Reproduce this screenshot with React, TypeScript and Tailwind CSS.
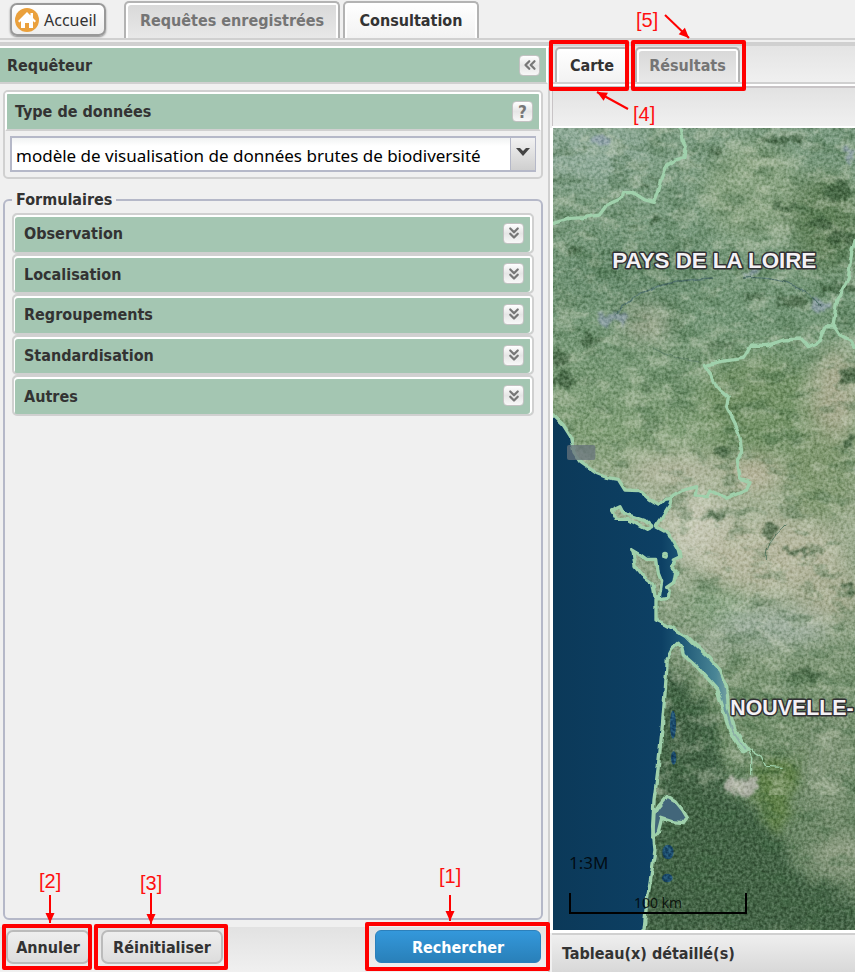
import type { ReactNode } from "react";
import { ChevronsDown, ChevronsLeft } from "lucide-react";

const FORMS = ["Observation", "Localisation", "Regroupements", "Standardisation", "Autres"];

const PLAIN = "font-['Noto_Sans',Tahoma,sans-serif]";

const TOOL =
  "flex h-[21px] w-[21px] items-center justify-center rounded-[4px] border border-[#c2c2c2] bg-linear-to-b from-white via-[#e6e6e6] to-[#f8f8f8] text-[#777]";

type Arrow = { x1: number; y1: number; x2: number; y2: number };

function Callout({
  box,
  label,
  labelAt,
  arrow,
}: {
  box: string;
  label: string;
  labelAt: string;
  arrow: Arrow;
}) {
  const angle = (Math.atan2(arrow.y2 - arrow.y1, arrow.x2 - arrow.x1) * 180) / Math.PI;
  return (
    <span
      className={`pointer-events-none absolute z-10 rounded-[2px] border-4 border-[#ff0000] ${box}`}
    >
      <span
        className={`absolute font-['Liberation_Sans',Arial,sans-serif] text-[20px] leading-5 font-normal text-[#ff1010] ${labelAt}`}
      >
        {label}
      </span>
      <svg className="absolute top-0 left-0 overflow-visible" width="1" height="1" aria-hidden="true">
        <path
          d={`M${arrow.x1} ${arrow.y1}L${arrow.x2} ${arrow.y2}`}
          stroke="#ff0000"
          strokeWidth="2"
        />
        <path
          d="M0 0L-10 -4.5V4.5Z"
          fill="#ff0000"
          transform={`translate(${arrow.x2} ${arrow.y2}) rotate(${angle})`}
        />
      </svg>
    </span>
  );
}

function Tab({
  active,
  className,
  children,
  callout,
}: {
  active?: boolean;
  className: string;
  children: ReactNode;
  callout?: ReactNode;
}) {
  return (
    <div className="relative flex">
      <button
        type="button"
        role="tab"
        aria-selected={!!active}
        className={`rounded-t-[5px] border-2 border-b-0 border-[#b3b3b3] bg-linear-to-b font-bold whitespace-nowrap shadow-[inset_2px_2px_0_#fff,inset_-2px_0_0_#fff] ${
          active ? "from-white to-[#f2f2f2] text-[#333]" : "from-[#d8d8d8] to-[#e8e8e8] text-[#757575]"
        } ${className}`}
      >
        {children}
      </button>
      {callout}
    </div>
  );
}

const COAST =
  "M0 861L31 891 53 926 63 976 81 1001 131 1036 161 1048 196 1054 216 1086 261 1088 291 1116 316 1131 336 1111 356 1108 349 1136 326 1171 309 1196 336 1211 356 1231 376 1266 381 1286 361 1296 366 1311 356 1318 371 1331 366 1361 341 1378 349 1391 346 1408 309 1414 309 1476 341 1491 401 1526 421 1546 471 1591 501 1626 521 1676 526 1736 546 1806 586 1866 571 1871 531 1811 511 1746 491 1681 431 1616 391 1581 386 1560 376 1546 356 1566 343 1590 341 1626 336 1696 326 1816 316 1916 303 2016 299 2096 306 2166 291 2266 281 2326 273 2406";
const RE = "M176 1148L201 1136 211 1156 241 1166 276 1178 296 1196 281 1204 251 1188 226 1174 191 1174Z";
const OLERON =
  "M236 1264L256 1276 281 1294 311 1294 316 1336 326 1361 319 1406 306 1406 299 1366 266 1341 246 1316 241 1276Z";
const LAGOON = "M303 2056L316 2036 341 2006 366 2021 386 2046 401 2071 391 2084 356 2081 326 2071 316 2111 299 2131Z";
const REGIONS = [
  "M381 0L388 36 399 61 396 89 366 96 341 113 326 156 316 191 304 223 276 216 241 194 211 194 209 209 161 231 139 261 91 269 51 271 0 286",
  "M906 341L896 371 886 451 851 516 841 591 861 621 891 636 906 661",
  "M841 597L816 596 799 641 766 656 746 633 691 636 641 653 596 651 571 691 501 701 454 713 481 756 491 776 526 806 521 836 546 886 561 926 566 976 553 996 561 1051 591 1061 581 1086 521 1111 471 1086 461 1106 426 1104 431 1076 381 1089 351 1108",
];
const WOODS = [
  [680, 35, 70, 13], [860, 190, 45, 25], [790, 290, 50, 14], [870, 480, 60, 16], [720, 520, 45, 16],
  [860, 330, 40, 20], [700, 240, 36, 12], [60, 365, 30, 14], [30, 760, 34, 30], [20, 690, 30, 20],
  [115, 640, 24, 15], [515, 650, 36, 8], [505, 975, 26, 16], [650, 1208, 22, 24], [730, 1270, 44, 10],
  [490, 1165, 22, 9], [885, 1380, 14, 22], [300, 162, 20, 7], [310, 275, 24, 8], [600, 505, 32, 9],
  [890, 940, 16, 20], [885, 745, 24, 22], [480, 70, 16, 14], [278, 778, 8, 8], [760, 1640, 50, 16],
];

function SatelliteMap() {
  return (
    <svg
      viewBox="0 0 906 2406"
      preserveAspectRatio="xMinYMin slice"
      className="absolute inset-0 h-full w-full"
      role="img"
      aria-label="Carte satellite"
    >
      <defs>
        <clipPath id="land">
          <path d={`${COAST}H906V0H0Z`} />
          <path d={RE} />
          <path d={OLERON} />
        </clipPath>
        <linearGradient id="ground" x1="0" y1="0" x2="0" y2="1">
          <stop offset="0" stopColor="#7a9a80" />
          <stop offset=".24" stopColor="#719474" />
          <stop offset=".38" stopColor="#7e9c74" />
          <stop offset=".47" stopColor="#9eac8f" />
          <stop offset=".6" stopColor="#869c7e" />
          <stop offset=".74" stopColor="#6b8964" />
          <stop offset="1" stopColor="#5f7a5c" />
        </linearGradient>
        <linearGradient id="sea" x1="0" y1="0" x2="1" y2="0">
          <stop offset="0" stopColor="#0b3959" />
          <stop offset=".36" stopColor="#0d4064" />
          <stop offset=".42" stopColor="#1c5574" />
          <stop offset=".54" stopColor="#4a8696" />
          <stop offset=".6" stopColor="#8fb0a6" />
        </linearGradient>
        <filter id="soft" x="-50%" y="-50%" width="200%" height="200%">
          <feGaussianBlur stdDeviation="32" />
        </filter>
        <filter id="edge" x="-50%" y="-50%" width="200%" height="200%">
          <feTurbulence type="fractalNoise" baseFrequency=".035" numOctaves="3" seed="8" />
          <feDisplacementMap in="SourceGraphic" scale="60" xChannelSelector="R" yChannelSelector="G" />
          <feGaussianBlur stdDeviation="3" />
        </filter>
        <filter id="forest" x="-20%" y="-20%" width="140%" height="140%">
          <feTurbulence type="fractalNoise" baseFrequency=".02" numOctaves="4" seed="4" />
          <feDisplacementMap in="SourceGraphic" scale="110" xChannelSelector="R" yChannelSelector="G" />
          <feGaussianBlur stdDeviation="12" />
        </filter>
        <filter id="wobble" x="-5%" y="-5%" width="110%" height="110%">
          <feTurbulence type="fractalNoise" baseFrequency=".04" numOctaves="1" seed="3" />
          <feDisplacementMap in="SourceGraphic" scale="14" xChannelSelector="R" yChannelSelector="G" />
        </filter>
        <filter id="fields" x="0" y="0" width="100%" height="100%" colorInterpolationFilters="sRGB">
          <feTurbulence type="fractalNoise" baseFrequency=".11" numOctaves="2" seed="12" />
          <feColorMatrix values="1.8 0 0 0 -.34 1.8 0 0 0 -.34 1.8 0 0 0 -.34 0 0 0 0 1" />
        </filter>
        <filter id="groves" x="0" y="0" width="100%" height="100%" colorInterpolationFilters="sRGB">
          <feTurbulence type="fractalNoise" baseFrequency=".012 .022" numOctaves="5" seed="5" />
          <feColorMatrix values="0 0 0 0 .24 0 0 0 0 .4 0 0 0 0 .25 0 5 0 0 -2.6" />
        </filter>
        <filter id="clearings" x="0" y="0" width="100%" height="100%" colorInterpolationFilters="sRGB">
          <feTurbulence type="fractalNoise" baseFrequency=".014 .024" numOctaves="5" seed="21" />
          <feColorMatrix values="0 0 0 0 .8 0 0 0 0 .83 0 0 0 0 .74 0 0 5 0 -2.5" />
        </filter>
      </defs>
      <rect width="906" height="2406" fill="url(#sea)" />
      <g clipPath="url(#land)">
        <path d="M0 0H906V2406H0Z" fill="url(#ground)" />
        <g filter="url(#soft)">
          <ellipse cx="100" cy="70" rx="190" ry="100" fill="#8ca895" />
          <ellipse cx="600" cy="190" rx="150" ry="150" fill="#87a280" />
          <ellipse cx="240" cy="430" rx="230" ry="90" fill="#65896a" />
          <ellipse cx="820" cy="280" rx="110" ry="150" fill="#5d7e56" />
          <ellipse cx="280" cy="590" rx="80" ry="50" fill="#95a188" />
          <ellipse cx="620" cy="840" rx="180" ry="150" fill="#6f8f63" />
          <ellipse cx="850" cy="800" rx="70" ry="140" fill="#a9ab90" />
          <ellipse cx="370" cy="1030" rx="150" ry="45" fill="#b5b7a0" />
          <ellipse cx="600" cy="1040" rx="80" ry="40" fill="#beb59e" />
          <ellipse cx="440" cy="1210" rx="100" ry="110" fill="#c4c6b2" />
          <ellipse cx="660" cy="1290" rx="210" ry="110" fill="#b4b59c" />
          <ellipse cx="830" cy="1400" rx="100" ry="80" fill="#a6ab90" />
          <ellipse cx="800" cy="1040" rx="100" ry="140" fill="#7b946c" />
          <ellipse cx="500" cy="1430" rx="100" ry="60" fill="#82a07e" />
          <ellipse cx="660" cy="1500" rx="170" ry="50" fill="#a0b0a1" />
          <ellipse cx="450" cy="1560" rx="70" ry="40" fill="#9cab96" />
          <ellipse cx="820" cy="1900" rx="90" ry="180" fill="#7b9273" />
          <ellipse cx="880" cy="2180" rx="110" ry="60" fill="#8f9e83" />
        </g>
        <path
          d="M330 1590L400 1640 470 1740 490 1850 520 1900 520 1980 610 2050 680 2120 730 2220 830 2290 906 2310V2420H260L300 2100Z"
          fill="#416043"
          filter="url(#forest)"
        />
        <path d="M620 1900L740 1870 730 2040 670 2120 600 2010Z" fill="#5b7d45" filter="url(#forest)" />
        <ellipse cx="560" cy="1975" rx="48" ry="32" fill="#a9ada0" filter="url(#edge)" />
        <rect width="906" height="2000" filter="url(#clearings)" opacity=".32" />
        <rect width="906" height="2406" filter="url(#groves)" opacity=".35" />
        <g fill="#345634" opacity=".65" filter="url(#edge)">
          {WOODS.map(([x, y, rx, ry]) => (
            <ellipse key={`${x}-${y}`} cx={x} cy={y} rx={rx} ry={ry} />
          ))}
        </g>
        <g fill="#8c9dab" opacity=".75" filter="url(#edge)">
          <ellipse cx="175" cy="570" rx="42" ry="22" />
          <ellipse cx="800" cy="535" rx="26" ry="20" />
          <ellipse cx="140" cy="30" rx="24" ry="20" />
          <ellipse cx="895" cy="80" rx="14" ry="26" />
          <ellipse cx="600" cy="432" rx="22" ry="9" />
        </g>
        <path d="M190 560Q230 505 300 480T480 450M570 450Q720 440 800 530" fill="none" stroke="#4f7169" strokeWidth="4" filter="url(#wobble)" />
        <path d="M300 660Q350 690 440 702M640 1300Q630 1250 700 1190" fill="none" stroke="#5a7b63" strokeWidth="3" filter="url(#wobble)" />
        <g fill="#1a4a6b">
          <ellipse cx="360" cy="1790" rx="9" ry="42" />
          <ellipse cx="362" cy="1890" rx="8" ry="20" />
          <ellipse cx="345" cy="2172" rx="17" ry="22" />
          <ellipse cx="343" cy="2250" rx="16" ry="13" />
        </g>
        <rect
          width="906"
          height="2406"
          filter="url(#fields)"
          opacity=".45"
          className="mix-blend-soft-light"
        />
      </g>
      <path d={LAGOON} fill="#42667a" />
      <g
        fill="none"
        stroke="#9fd0ab"
        strokeWidth="10"
        strokeLinejoin="round"
        strokeLinecap="round"
        filter="url(#wobble)"
      >
        <path d={COAST} />
        <path d={RE} />
        <path d={OLERON} />
        <path d={LAGOON} />
        <circle cx="336" cy="1280" r="4" />
        {REGIONS.map((d) => (
          <path key={d} d={d} />
        ))}
        <path d="M581 1857L596 1890 596 1940M586 1862L625 1885 638 1915 690 1918" strokeWidth="4" />
      </g>
      <rect x="42" y="951" width="85" height="45" rx="6" fill="#67737b" opacity=".75" />
      <g
        className="font-['Liberation_Sans',Arial,sans-serif] font-bold"
        fontSize="67"
        fill="#f4f1f5"
        stroke="#303033"
        strokeWidth="9"
        strokeLinejoin="round"
        paintOrder="stroke"
      >
        <text x="178" y="420">PAYS DE LA LOIRE</text>
        <text x="532" y="1762" fontSize="64">NOUVELLE-</text>
      </g>
    </svg>
  );
}

export default function App() {
  return (
    <div className="flex min-h-screen flex-col overflow-hidden bg-[#f0f0f0] font-['DejaVu_Sans_Condensed','DejaVu_Sans',Tahoma,sans-serif] text-[16px] leading-5 text-[#333]">
      <header className="flex h-[46px] shrink-0 flex-col border-b-4 border-[#d0d0d0]">
        <div className="flex h-10 items-end border-b-2 border-[#d0d0d0]">
          <button
            type="button"
            className={`mb-0.5 ml-[10px] flex h-[33px] w-24 items-center gap-[5px] rounded-[7px] border-2 border-[#999] bg-linear-to-b from-white to-[#eee] pl-[3px] shadow-[0_1px_2px_#888] ${PLAIN}`}
          >
            <svg viewBox="0 0 24 24" className="h-6 w-6" aria-hidden="true">
              <circle cx="12" cy="12" r="12" fill="#eaa03c" />
              <path d="M3 13L12 4l3.5 3.5V5H18v5l3 3-1.500 1.500L18 13v7h-4v-5h-4v5H6v-7l-1.500 1.500Z" fill="#fff" />
            </svg>
            Accueil
          </button>
          <nav role="tablist" className="ml-[18px] flex gap-[3px]">
            <Tab className="h-[37px] w-[216px]">Requêtes enregistrées</Tab>
            <Tab active className="h-[37px] w-[136px]">
              Consultation
            </Tab>
          </nav>
        </div>
      </header>

      <main className="flex flex-1">
        <section className="flex w-[550px] shrink-0 flex-col rounded-tr-[5px] border-r-2 border-[#d0d0d0]">
          <div className="flex h-[38px] items-center justify-between border-t-2 border-r-2 border-b-2 border-t-white border-r-white border-b-[#d0d0d0] bg-[#a4c6b2] pr-[6px] pl-[7px]">
            <h2 className="pt-0.5 font-bold">Requêteur</h2>
            <button type="button" aria-label="Réduire" className={TOOL}>
              <ChevronsLeft size={18} strokeWidth={3} />
            </button>
          </div>

          <div className="mx-[3px] mt-[6px] mr-[5px] rounded-[5px] border-2 border-[#d0d0d0]">
            <div className="flex h-[39px] items-center justify-between rounded-t-[3px] border-2 border-white border-b-[#d0d0d0] bg-[#a4c6b2] pr-[6px] pl-2">
              <label htmlFor="type" className="font-bold">
                Type de données
              </label>
              <button type="button" aria-label="Aide" className={`${TOOL} text-[17px] leading-4 font-bold`}>
                ?
              </button>
            </div>
            <div className="relative m-[5px] h-9">
              <select
                id="type"
                className={`h-full w-full appearance-none border-2 border-[#b5b8c8] bg-white bg-linear-to-b from-[#f1f3f3] to-white to-25% pt-1 pl-1 text-[17px] text-black ${PLAIN}`}
              >
                <option>modèle de visualisation de données brutes de biodiversité</option>
              </select>
              <span className="pointer-events-none absolute inset-y-0.5 right-0 flex w-[26px] items-center justify-center border-x border-[#b5b8c8] bg-linear-to-b from-[#f2f2f2] to-[#cfcfcf]">
                <svg viewBox="0 0 14 8" className="mb-1 h-2 w-3.5" aria-hidden="true">
                  <path d="M0 0H4L7 3 10 0H14L7 8Z" fill="#444" />
                </svg>
              </span>
            </div>
          </div>

          <fieldset className="mx-[3px] mt-[11px] mr-[5px] mb-[7px] flex-1 rounded-[6px] border-2 border-[#b5b8c8] px-[7px]">
            <legend className="px-1 font-bold">Formulaires</legend>
            <div className="mt-[3px] grid h-[203px] grid-rows-5">
              {FORMS.map((name) => (
                <div
                  key={name}
                  className="flex items-center justify-between rounded-[5px] border-2 border-[#d0d0d0] bg-[#a4c6b2] pr-[8px] pl-[10px] shadow-[inset_1px_2px_0_#fff,inset_-2px_0_0_#fff]"
                >
                  <h3 className="pt-0.5 font-bold">{name}</h3>
                  <button type="button" aria-label={`Déplier ${name}`} className={TOOL}>
                    <ChevronsDown size={18} strokeWidth={3} />
                  </button>
                </div>
              ))}
            </div>
          </fieldset>

          <footer className="flex h-[45px] items-start bg-linear-to-b from-[#e2e2e2] to-[#f0f0f0] pt-[3px] pr-[7px] pl-[6px]">
            <div className="relative">
              <button
                type="button"
                className="h-[34px] w-[84px] rounded-[7px] border-2 border-[#bbb] bg-linear-to-b from-[#eee] to-[#ddd] pt-0.5 font-bold"
              >
                Annuler
              </button>
              <Callout
                box="-top-[6px] -left-[4px] h-[46px] w-[90px]"
                label="[2]"
                labelAt="-top-[57px] left-[33px]"
                arrow={{ x1: 44, y1: -33, x2: 44, y2: -5 }}
              />
            </div>
            <div className="relative ml-[11px]">
              <button
                type="button"
                className="h-[34px] w-[122px] rounded-[7px] border-2 border-[#bbb] bg-linear-to-b from-[#eee] to-[#ddd] pt-0.5 font-bold"
              >
                Réinitialiser
              </button>
              <Callout
                box="-top-[6px] -left-[7px] h-[46px] w-[134px]"
                label="[3]"
                labelAt="-top-[55px] left-[42px]"
                arrow={{ x1: 53, y1: -35, x2: 53, y2: -4 }}
              />
            </div>
            <div className="relative ml-auto">
              <button
                type="button"
                className="h-[33px] w-[166px] rounded-[6px] border border-[#2c80bb] bg-linear-to-b from-[#3498db] to-[#2980b9] pt-0.5 font-bold text-white"
              >
                Rechercher
              </button>
              <Callout
                box="-top-[8px] -left-[10px] h-[49px] w-[185px]"
                label="[1]"
                labelAt="-top-[60px] left-[70px]"
                arrow={{ x1: 81, y1: -31, x2: 81, y2: -5 }}
              />
            </div>
          </footer>
        </section>

        <section className="flex min-w-0 flex-1 flex-col">
          <nav role="tablist" className="flex h-[38px] items-end gap-[6px] border-b-2 border-[#d0d0d0] bg-linear-to-b from-[#e4e4e4] to-[#f0f0f0] pl-[5px]">
            <Tab
              active
              className="h-[35px] w-[74px]"
              callout={
                <Callout
                  box="-top-[7px] -left-[6px] h-[51px] w-[80px]"
                  label="[4]"
                  labelAt="top-[60px] left-[80px]"
                  arrow={{ x1: 75, y1: 65, x2: 44, y2: 48 }}
                />
              }
            >
              Carte
            </Tab>
            <Tab
              className="h-[35px] w-[105px]"
              callout={
                <Callout
                  box="-top-[7px] -left-[4px] h-[51px] w-[115px]"
                  label="[5]"
                  labelAt="-top-[34px] left-[1px]"
                  arrow={{ x1: 30, y1: -29, x2: 54, y2: -6 }}
                />
              }
            >
              Résultats
            </Tab>
          </nav>
          <div className="ml-[2px] h-[44px] border-y-2 border-white">
            <div className="h-full border-t-2 border-l border-[#c8c4c6] bg-linear-to-b from-[#e2e2e2] to-[#f0f0f0]" />
          </div>
          <div className={`relative flex-1 border-b-[3px] border-l-[3px] border-white text-black/80 ${PLAIN}`}>
            <SatelliteMap />
            <div className="absolute bottom-[16px] left-[16px]">
              <div className="pb-[20px] text-[17px]">1:3M</div>
              <div className="h-[21px] w-[178px] border-2 border-t-0 border-black text-center text-[14px] leading-5">
                100 km
              </div>
            </div>
          </div>
          <h2 className="ml-[2px] h-[39px] border-t-2 border-[#d0d0d0] bg-linear-to-b from-[#efefef] to-[#d8d8d8] pt-[9px] pl-[10px] font-bold">
            Tableau(x) détaillé(s)
          </h2>
        </section>
      </main>
    </div>
  );
}
